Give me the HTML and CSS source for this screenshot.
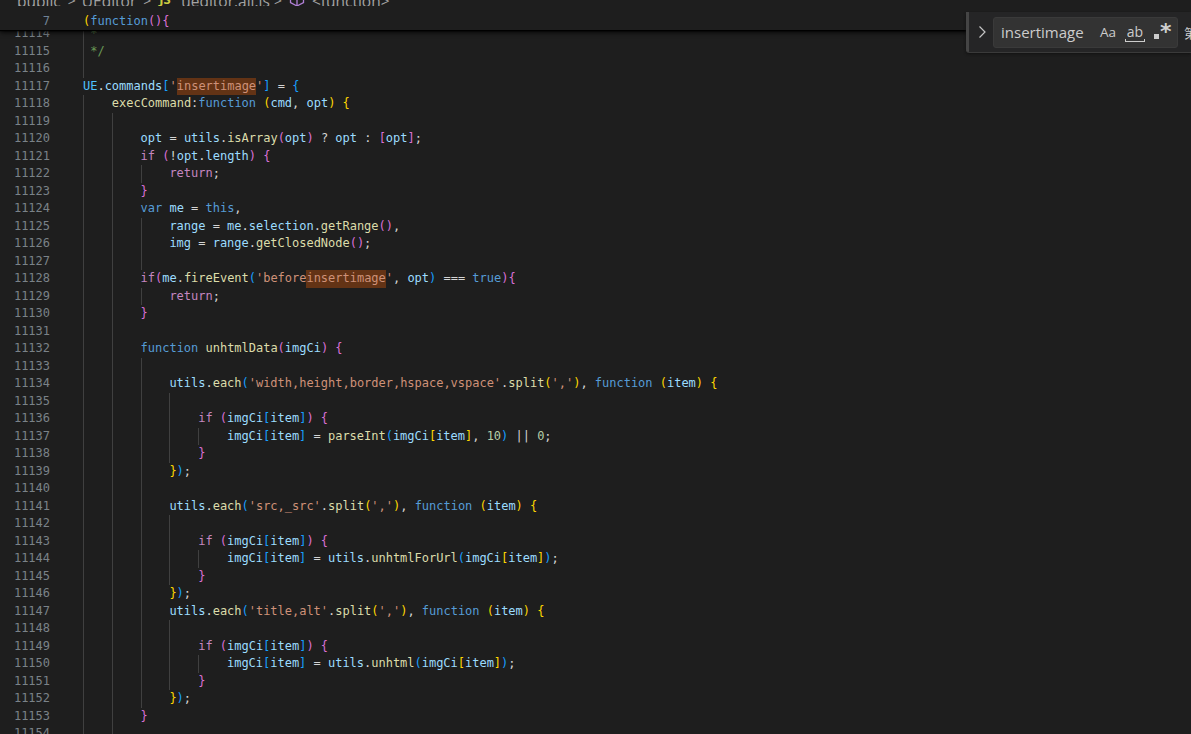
FILE: index.html
```html
<!DOCTYPE html>
<html lang="en">
<head>
    <meta charset="UTF-8">
    <title>ueditor.all.js</title>
    <link rel="stylesheet" href="styles.css">
</head>
<body>
    <div class="top">
        <div class="crumbs">
            <span>public</span><span class="sep">&gt;</span>
            <span>UEditor</span><span class="sep">&gt;</span>
            <span class="js">JS</span><span>ueditor.all.js</span><span class="sep sep-tight">&gt;</span>
            <svg class="cube" width="16" height="16" viewBox="0 0 16 16"><path d="M8 1l6.5 3.5v7L8 15l-6.5-3.5v-7zM1.5 4.5L8 8l6.5-3.5M8 8v7" fill="none" stroke="#b180d7" stroke-width="1.3"/></svg>
            <span>&lt;function&gt;</span>
        </div>
        <div class="ln sticky"><span class="num">7</span><span class="code"><i class="o">(</i><i class="s">function</i><i class="p">(){</i></span></div>
    </div>

    <div class="editor">
        <div class="lines">
            <div class="ln"><span class="num">11114</span><span class="code"><i class="g g-short"></i><i class="c">*</i></span></div>
            <div class="ln"><span class="num">11115</span><span class="code"><i class="g g-short"></i><i class="c">*/</i></span></div>
            <div class="ln"><span class="num">11116</span><span class="code"><i class="g"></i></span></div>
            <div class="ln"><span class="num">11117</span><span class="code"><i class="u">UE</i>.<i class="v">commands</i><i class="b">[</i><i class="t">'<i class="m">insertimage</i>'</i><i class="b">]</i> = <i class="b">{</i></span></div>
            <div class="ln"><span class="num">11118</span><span class="code"><i class="g"></i><i class="f">execCommand</i>:<i class="s">function</i> <i class="o">(</i><i class="v">cmd</i>, <i class="v">opt</i><i class="o">)</i> <i class="o">{</i></span></div>
            <div class="ln"><span class="num">11119</span><span class="code"><i class="g"></i><i class="g"></i></span></div>
            <div class="ln"><span class="num">11120</span><span class="code"><i class="g"></i><i class="g"></i><i class="v">opt</i> = <i class="v">utils</i>.<i class="f">isArray</i><i class="p">(</i><i class="v">opt</i><i class="p">)</i> ? <i class="v">opt</i> : <i class="p">[</i><i class="v">opt</i><i class="p">]</i>;</span></div>
            <div class="ln"><span class="num">11121</span><span class="code"><i class="g"></i><i class="g"></i><i class="k">if</i> <i class="p">(</i>!<i class="v">opt</i>.<i class="v">length</i><i class="p">)</i> <i class="p">{</i></span></div>
            <div class="ln"><span class="num">11122</span><span class="code"><i class="g"></i><i class="g"></i><i class="g"></i><i class="k">return</i>;</span></div>
            <div class="ln"><span class="num">11123</span><span class="code"><i class="g"></i><i class="g"></i><i class="p">}</i></span></div>
            <div class="ln"><span class="num">11124</span><span class="code"><i class="g"></i><i class="g"></i><i class="s">var</i> <i class="v">me</i> = <i class="s">this</i>,</span></div>
            <div class="ln"><span class="num">11125</span><span class="code"><i class="g"></i><i class="g"></i><i class="g"></i><i class="v">range</i> = <i class="v">me</i>.<i class="v">selection</i>.<i class="f">getRange</i><i class="p">()</i>,</span></div>
            <div class="ln"><span class="num">11126</span><span class="code"><i class="g"></i><i class="g"></i><i class="g"></i><i class="v">img</i> = <i class="v">range</i>.<i class="f">getClosedNode</i><i class="p">()</i>;</span></div>
            <div class="ln"><span class="num">11127</span><span class="code"><i class="g"></i><i class="g"></i><i class="g"></i></span></div>
            <div class="ln"><span class="num">11128</span><span class="code"><i class="g"></i><i class="g"></i><i class="k">if</i><i class="p">(</i><i class="v">me</i>.<i class="f">fireEvent</i><i class="b">(</i><i class="t">'before<i class="m">insertimage</i>'</i>, <i class="v">opt</i><i class="b">)</i> === <i class="s">true</i><i class="p">){</i></span></div>
            <div class="ln"><span class="num">11129</span><span class="code"><i class="g"></i><i class="g"></i><i class="g"></i><i class="k">return</i>;</span></div>
            <div class="ln"><span class="num">11130</span><span class="code"><i class="g"></i><i class="g"></i><i class="p">}</i></span></div>
            <div class="ln"><span class="num">11131</span><span class="code"><i class="g"></i><i class="g"></i></span></div>
            <div class="ln"><span class="num">11132</span><span class="code"><i class="g"></i><i class="g"></i><i class="s">function</i> <i class="f">unhtmlData</i><i class="p">(</i><i class="v">imgCi</i><i class="p">)</i> <i class="p">{</i></span></div>
            <div class="ln"><span class="num">11133</span><span class="code"><i class="g"></i><i class="g"></i><i class="g"></i></span></div>
            <div class="ln"><span class="num">11134</span><span class="code"><i class="g"></i><i class="g"></i><i class="g"></i><i class="v">utils</i>.<i class="f">each</i><i class="b">(</i><i class="t">'width,height,border,hspace,vspace'</i>.<i class="f">split</i><i class="o">(</i><i class="t">','</i><i class="o">)</i>, <i class="s">function</i> <i class="o">(</i><i class="v">item</i><i class="o">)</i> <i class="o">{</i></span></div>
            <div class="ln"><span class="num">11135</span><span class="code"><i class="g"></i><i class="g"></i><i class="g"></i><i class="g"></i></span></div>
            <div class="ln"><span class="num">11136</span><span class="code"><i class="g"></i><i class="g"></i><i class="g"></i><i class="g"></i><i class="k">if</i> <i class="p">(</i><i class="v">imgCi</i><i class="b">[</i><i class="v">item</i><i class="b">]</i><i class="p">)</i> <i class="p">{</i></span></div>
            <div class="ln"><span class="num">11137</span><span class="code"><i class="g"></i><i class="g"></i><i class="g"></i><i class="g"></i><i class="g"></i><i class="v">imgCi</i><i class="b">[</i><i class="v">item</i><i class="b">]</i> = <i class="f">parseInt</i><i class="b">(</i><i class="v">imgCi</i><i class="o">[</i><i class="v">item</i><i class="o">]</i>, <i class="n">10</i><i class="b">)</i> || <i class="n">0</i>;</span></div>
            <div class="ln"><span class="num">11138</span><span class="code"><i class="g"></i><i class="g"></i><i class="g"></i><i class="g"></i><i class="p">}</i></span></div>
            <div class="ln"><span class="num">11139</span><span class="code"><i class="g"></i><i class="g"></i><i class="g"></i><i class="o">}</i><i class="b">)</i>;</span></div>
            <div class="ln"><span class="num">11140</span><span class="code"><i class="g"></i><i class="g"></i><i class="g"></i></span></div>
            <div class="ln"><span class="num">11141</span><span class="code"><i class="g"></i><i class="g"></i><i class="g"></i><i class="v">utils</i>.<i class="f">each</i><i class="b">(</i><i class="t">'src,_src'</i>.<i class="f">split</i><i class="o">(</i><i class="t">','</i><i class="o">)</i>, <i class="s">function</i> <i class="o">(</i><i class="v">item</i><i class="o">)</i> <i class="o">{</i></span></div>
            <div class="ln"><span class="num">11142</span><span class="code"><i class="g"></i><i class="g"></i><i class="g"></i><i class="g"></i></span></div>
            <div class="ln"><span class="num">11143</span><span class="code"><i class="g"></i><i class="g"></i><i class="g"></i><i class="g"></i><i class="k">if</i> <i class="p">(</i><i class="v">imgCi</i><i class="b">[</i><i class="v">item</i><i class="b">]</i><i class="p">)</i> <i class="p">{</i></span></div>
            <div class="ln"><span class="num">11144</span><span class="code"><i class="g"></i><i class="g"></i><i class="g"></i><i class="g"></i><i class="g"></i><i class="v">imgCi</i><i class="b">[</i><i class="v">item</i><i class="b">]</i> = <i class="v">utils</i>.<i class="f">unhtmlForUrl</i><i class="b">(</i><i class="v">imgCi</i><i class="o">[</i><i class="v">item</i><i class="o">]</i><i class="b">)</i>;</span></div>
            <div class="ln"><span class="num">11145</span><span class="code"><i class="g"></i><i class="g"></i><i class="g"></i><i class="g"></i><i class="p">}</i></span></div>
            <div class="ln"><span class="num">11146</span><span class="code"><i class="g"></i><i class="g"></i><i class="g"></i><i class="o">}</i><i class="b">)</i>;</span></div>
            <div class="ln"><span class="num">11147</span><span class="code"><i class="g"></i><i class="g"></i><i class="g"></i><i class="v">utils</i>.<i class="f">each</i><i class="b">(</i><i class="t">'title,alt'</i>.<i class="f">split</i><i class="o">(</i><i class="t">','</i><i class="o">)</i>, <i class="s">function</i> <i class="o">(</i><i class="v">item</i><i class="o">)</i> <i class="o">{</i></span></div>
            <div class="ln"><span class="num">11148</span><span class="code"><i class="g"></i><i class="g"></i><i class="g"></i><i class="g"></i></span></div>
            <div class="ln"><span class="num">11149</span><span class="code"><i class="g"></i><i class="g"></i><i class="g"></i><i class="g"></i><i class="k">if</i> <i class="p">(</i><i class="v">imgCi</i><i class="b">[</i><i class="v">item</i><i class="b">]</i><i class="p">)</i> <i class="p">{</i></span></div>
            <div class="ln"><span class="num">11150</span><span class="code"><i class="g"></i><i class="g"></i><i class="g"></i><i class="g"></i><i class="g"></i><i class="v">imgCi</i><i class="b">[</i><i class="v">item</i><i class="b">]</i> = <i class="v">utils</i>.<i class="f">unhtml</i><i class="b">(</i><i class="v">imgCi</i><i class="o">[</i><i class="v">item</i><i class="o">]</i><i class="b">)</i>;</span></div>
            <div class="ln"><span class="num">11151</span><span class="code"><i class="g"></i><i class="g"></i><i class="g"></i><i class="g"></i><i class="p">}</i></span></div>
            <div class="ln"><span class="num">11152</span><span class="code"><i class="g"></i><i class="g"></i><i class="g"></i><i class="o">}</i><i class="b">)</i>;</span></div>
            <div class="ln"><span class="num">11153</span><span class="code"><i class="g"></i><i class="g"></i><i class="p">}</i></span></div>
            <div class="ln"><span class="num">11154</span><span class="code"><i class="g"></i><i class="g"></i></span></div>
        </div>
    </div>

    <div class="find">
        <svg class="find-toggle" width="16" height="16" viewBox="0 0 16 16"><path d="M5.5 2.5L11 8l-5.5 5.5" fill="none" stroke="#c5c5c5" stroke-width="1.2"/></svg>
        <div class="find-input">
            <span class="find-text">insertimage</span>
            <span class="opt-case">Aa</span>
            <span class="opt-word">ab</span>
            <span class="opt-regex"><b></b>*</span>
        </div>
        <span class="find-count">第 1 项，共 3 项</span>
    </div>
</body>
</html>
```

FILE: styles.css
```css
html, body {
    margin: 0;
    height: 734px;
    overflow: hidden;
    background: #1e1e1e;
}
i {
    font-style: normal;
}
.top {
    position: relative;
    z-index: 2;
    height: 30px;
    background: #1e1e1e;
    box-shadow: 0 1px 1px #000, 0 2px 5px #000;
}
.crumbs {
    display: flex;
    align-items: center;
    gap: 7px;
    height: 6px;
    margin-bottom: 7px;
    padding-left: 17px;
    overflow: hidden;
    font: 15.5px/16px "Open Sans", sans-serif;
    color: #a3a3a3;
    white-space: nowrap;
}
.crumbs > * {
    flex: none;
    margin-top: -4px;
}
.sep {
    width: 7px;
    font-size: 14px;
}
.sep-tight {
    margin-left: -3px;
}
.crumbs .js {
    width: 15px;
    margin-left: 2px;
    margin-top: -8px;
    font-weight: 700;
    font-size: 13px;
    color: #cbcb41;
}
.crumbs .cube {
    margin-left: 1px;
    margin-top: -8px;
}
.ln {
    display: flex;
    height: 17.5px;
    font: 12px/17.5px "DejaVu Sans Mono", monospace;
    letter-spacing: -0.015px;
    color: #d4d4d4;
    white-space: pre;
}
.sticky .num {
    color: #6f8296;
}
.num {
    flex: none;
    width: 50px;
    text-align: right;
    color: #7a8288;
}
.code {
    margin-left: 33px;
}
.editor {
    height: 704px;
    overflow: hidden;
}
.lines {
    margin-top: -5px;
}
.g {
    display: inline-block;
    width: 28.8px;
    height: 17.5px;
    vertical-align: top;
    box-shadow: inset 1px 0 #404040;
}
.g-short {
    width: 7.2px;
}
.k { color: #c586c0; }
.s { color: #569cd6; }
.v { color: #9cdcfe; }
.u { color: #4fc1ff; }
.f { color: #dcdcaa; }
.t { color: #ce9178; }
.c { color: #6a9955; }
.n { color: #b5cea8; }
.o { color: #ffd700; }
.p { color: #da70d6; }
.b { color: #179fff; }
.m {
    display: inline-block;
    background: #633315;
}

/* find widget sits over the editor */
.find {
    position: absolute;
    top: 12px;
    left: 966px;
    right: 0;
    height: 40px;
    display: flex;
    align-items: center;
    z-index: 3;
    background: #252526;
    border-left: 3px solid #454545;
    border-bottom-left-radius: 3px;
    box-shadow: 0 1px #3a3a3a, 0 2px 3px #111;
    overflow: hidden;
    white-space: nowrap;
    font-family: "Open Sans", sans-serif;
    color: #cccccc;
}
.find-toggle {
    flex: none;
    margin-left: 5px;
}
.find-input {
    flex: none;
    display: flex;
    align-items: center;
    box-sizing: border-box;
    width: 185px;
    height: 31px;
    margin-left: 3px;
    padding-left: 7px;
    background: #333333;
    border: 1px solid #3a3a3a;
    border-radius: 3px;
}
.find-text {
    width: 99px;
    font-size: 15px;
}
.opt-case {
    width: 25px;
    font-size: 13.5px;
}
.opt-word {
    position: relative;
    width: 20px;
    font-size: 14px;
    line-height: 16px;
    text-align: center;
}
/* the bracket under "ab" */
.opt-word::after {
    content: "";
    position: absolute;
    left: 0;
    right: 0;
    bottom: -2px;
    height: 2px;
    border: 1px solid #cccccc;
    border-top: 0;
}
.opt-regex {
    display: flex;
    align-items: flex-start;
    margin-left: 9px;
    font: 700 22px/22px "DejaVu Sans", sans-serif;
    color: #d0d0d0;
}
.opt-regex b {
    width: 5px;
    height: 5px;
    margin-top: 13px;
    margin-right: 1px;
    background: #cccccc;
}
.find-count {
    flex: none;
    margin-left: 6px;
    font-size: 13px;
    font-family: "Noto Sans CJK SC", sans-serif;
}
```
